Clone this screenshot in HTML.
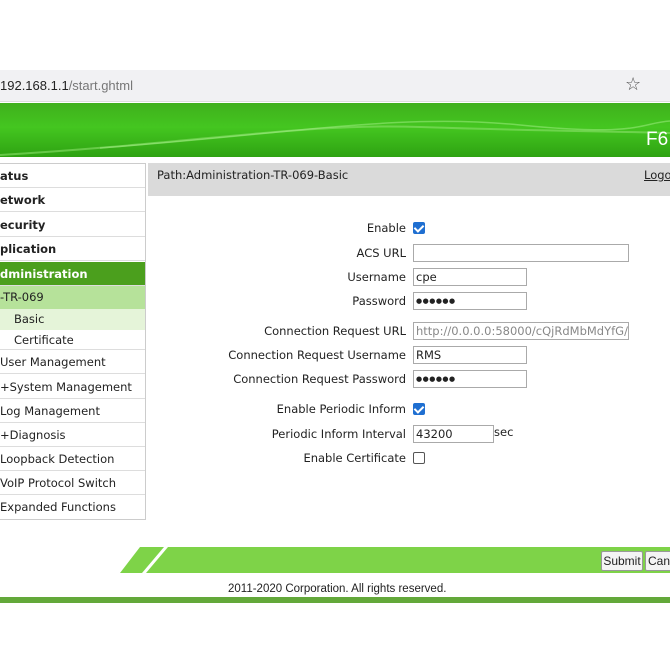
<!DOCTYPE html>
<html><head><style>
body{margin:0;width:670px;height:670px;overflow:hidden;background:#fff;font-family:"DejaVu Sans",Verdana,sans-serif;font-size:11.5px;color:#222;position:relative}
.a{position:absolute}
.addr{left:0;top:70px;width:670px;height:31px;background:#f1f1f3;border-bottom:1px solid #ddd}
.banner{left:0;top:103px;width:670px;height:54px;background:linear-gradient(180deg,#3fb01c 0%,#44c620 45%,#2ea212 100%)}
.side{left:0;top:163px;width:145px;height:355px;border-right:1px solid #ccc;border-bottom:1px solid #ccc;border-top:1px solid #ccc}
.r{position:absolute;left:0;width:145px;box-sizing:border-box;height:24px;line-height:24px;border-bottom:1px solid #ddd;white-space:nowrap;overflow:hidden}
.b{font-weight:bold}
.lbl{position:absolute;right:264px;white-space:nowrap}
.in{position:absolute;left:413px;border:1px solid #aaa;background:#fff;line-height:16px;padding-left:2px;box-sizing:border-box;height:18px;white-space:nowrap;overflow:hidden}
.pw{font-size:7px;letter-spacing:0.5px}
.cb{position:absolute;left:413px;width:12px;height:12px;border-radius:2px}
.on{background:#1f6fd1}
.off{border:1px solid #555;box-sizing:border-box;background:#fff}
.on:after{content:"";position:absolute;left:3px;top:1px;width:4px;height:7px;border:solid #fff;border-width:0 2px 2px 0;transform:rotate(45deg)}
</style></head><body>
<div class="a addr"></div>
<div class="a" style="left:0;top:78px;font-size:13px;color:#222;font-family:'Liberation Sans',sans-serif">192.168.1.1<span style="color:#777">/start.ghtml</span></div>
<div class="a" style="left:625px;top:74px;font-size:18px;color:#555">☆</div>
<div class="a banner"><svg width="670" height="54" style="position:absolute;left:0;top:0"><path d="M0 52 C200 40 300 20 420 24 S600 28 670 30" stroke="#8be06a" stroke-width="2" fill="none" opacity=".6"/><path d="M100 45 C300 30 400 10 520 22 S640 20 670 18" stroke="#a6f08a" stroke-width="1.5" fill="none" opacity=".5"/></svg></div>
<div class="a" style="left:646px;top:129px;color:#fff;font-size:19px;font-family:'Liberation Sans',sans-serif">F6</div>
<div class="a side">
<div class="r b" style="top:0">atus</div>
<div class="r b" style="top:24px">etwork</div>
<div class="r b" style="top:49px">ecurity</div>
<div class="r b" style="top:73px">plication</div>
<div class="r b" style="top:98px;background:#4b9f1d;color:#fff">dministration</div>
<div class="r" style="top:122px;background:#b6e29a;border:0;height:23px;line-height:23px">-TR-069</div>
<div class="r" style="top:145px;background:#e5f4d9;border:0;height:21px;line-height:21px;padding-left:14px">Basic</div>
<div class="r" style="top:166px;height:20px;line-height:20px;padding-left:14px">Certificate</div>
<div class="r" style="top:186px">User Management</div>
<div class="r" style="top:211px">+System Management</div>
<div class="r" style="top:235px">Log Management</div>
<div class="r" style="top:259px">+Diagnosis</div>
<div class="r" style="top:283px">Loopback Detection</div>
<div class="r" style="top:307px">VoIP Protocol Switch</div>
<div class="r" style="top:331px;border:0">Expanded Functions</div>
</div>
<div class="a" style="left:148px;top:163px;width:522px;height:33px;background:#dadada"></div>
<div class="a" style="left:157px;top:168px">Path:Administration-TR-069-Basic</div>
<div class="a" style="left:644px;top:168px;text-decoration:underline">Logo</div>

<div class="lbl" style="top:221px">Enable</div><div class="cb on" style="top:222px"></div>
<div class="lbl" style="top:246px">ACS URL</div><div class="in" style="top:244px;width:216px"></div>
<div class="lbl" style="top:270px">Username</div><div class="in" style="top:268px;width:114px">cpe</div>
<div class="lbl" style="top:294px">Password</div><div class="in pw" style="top:292px;width:114px">●●●●●●</div>
<div class="lbl" style="top:324px">Connection Request URL</div><div class="in" style="top:322px;width:216px;color:#888">http://0.0.0.0:58000/cQjRdMbMdYfG/</div>
<div class="lbl" style="top:348px">Connection Request Username</div><div class="in" style="top:346px;width:114px">RMS</div>
<div class="lbl" style="top:372px">Connection Request Password</div><div class="in pw" style="top:370px;width:114px">●●●●●●</div>
<div class="lbl" style="top:402px">Enable Periodic Inform</div><div class="cb on" style="top:403px"></div>
<div class="lbl" style="top:427px">Periodic Inform Interval</div><div class="in" style="top:425px;width:81px">43200</div>
<div class="a" style="left:494px;top:425px">sec</div>
<div class="lbl" style="top:451px">Enable Certificate</div><div class="cb off" style="top:452px"></div>

<svg class="a" style="left:120px;top:547px" width="550" height="26"><polygon points="20,0 550,0 550,26 0,26" fill="#7ed348"/><polygon points="44,0 48,0 26,26 22,26" fill="#fff"/></svg>
<div class="a" style="left:601px;top:551px;width:40px;height:18px;background:#f4f4f4;border:1px solid #999;border-radius:2px;font-family:'Liberation Sans',sans-serif;font-size:12px;line-height:18px;text-align:center">Submit</div>
<div class="a" style="left:645px;top:551px;width:40px;height:18px;background:#f4f4f4;border:1px solid #999;border-radius:2px;font-family:'Liberation Sans',sans-serif;font-size:12px;line-height:18px;padding-left:2px">Cancel</div>
<div class="a" style="left:228px;top:583px;font-family:'Liberation Sans',sans-serif;font-size:11.5px">2011-2020 Corporation. All rights reserved.</div>
<div class="a" style="left:0;top:597px;width:670px;height:6px;background:#63a83a"></div>
</body></html>
